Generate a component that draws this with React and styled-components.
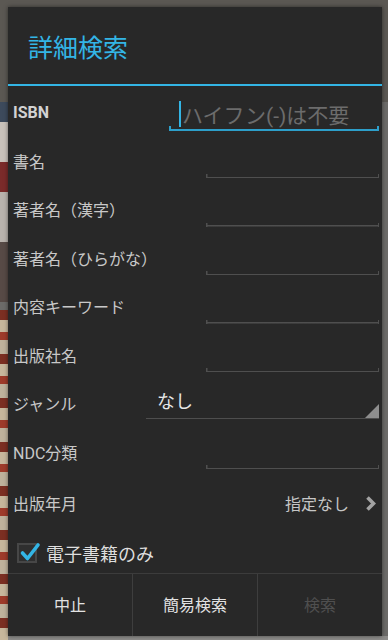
import React from 'react'
import styled, { createGlobalStyle } from 'styled-components'

const GlobalStyle = createGlobalStyle`
  html, body {
    margin: 0;
    padding: 0;
    width: 388px;
    height: 640px;
    overflow: hidden;
  }
  body {
    font-family: Roboto, "Noto Sans CJK JP", sans-serif;
    background: #6b6864;
    text-spacing-trim: space-all;
  }
`

const Screen = styled.div`
  width: 388px;
  height: 640px;
  box-sizing: border-box;
  padding: 7px 6px 4px 8px;
  display: flex;
  background:
    linear-gradient(#5b5853, #5b5853) left top / 100% 102px no-repeat,
    linear-gradient(180deg, #3d4a5c 0 20px, #c9c2bb 20px 60px, #7a2b2a 60px 90px, #b9b3ad 90px 140px, #574a46 140px 200px, transparent 200px) left 102px / 8px 100% no-repeat,
    repeating-linear-gradient(180deg, #7b2f22 0 10px, #c7b79c 10px 22px, #9e3b2a 22px 30px, #bfb29c 30px 44px) left 310px / 8px 330px no-repeat,
    linear-gradient(#8d8c8a, #8d8c8a) left 636px / 100% 4px no-repeat,
    #6c6b69;
`

const Dialog = styled.div`
  flex: 1;
  display: flex;
  flex-direction: column;
  background: #282828;
  box-shadow: 0 0 4px rgba(0, 0, 0, 0.5);
  overflow: hidden;
`

const TitleBar = styled.div`
  height: 77px;
  display: flex;
  align-items: center;
  padding-left: 20px;
  border-bottom: 2px solid #33b5e5;
  font-size: 25px;
  color: #33b5e5;
`

const Body = styled.div`
  padding-top: 2px;
  display: flex;
  flex-direction: column;
`

const Row = styled.div`
  height: ${({ $h }) => $h || 48.5}px;
  display: flex;
  align-items: center;
  padding: 0 3px 0 5px;
  box-sizing: border-box;
`

const Label = styled.div`
  flex: 1;
  font-size: 16px;
  font-weight: ${({ $bold }) => ($bold ? 700 : 400)};
  color: ${({ $bold }) => ($bold ? '#d2d2d2' : '#c8c8c8')};
  white-space: nowrap;
`

const Field = styled.div`
  align-self: flex-end;
  width: ${({ $w }) => $w}px;
  height: 34px;
  margin-bottom: ${({ $mb }) => ($mb != null ? $mb : 6)}px;
  display: flex;
  align-items: center;
  padding-left: 10px;
  box-sizing: border-box;
  background:
    linear-gradient(${({ $c }) => $c}, ${({ $c }) => $c}) left bottom / 100% ${({ $t }) => $t}px no-repeat,
    linear-gradient(${({ $c }) => $c}, ${({ $c }) => $c}) left bottom / ${({ $t }) => $t}px ${({ $tick }) => $tick}px no-repeat,
    linear-gradient(${({ $c }) => $c}, ${({ $c }) => $c}) right bottom / ${({ $t }) => $t}px ${({ $tick }) => $tick}px no-repeat;
`

const Cursor = styled.span`
  width: 2px;
  height: 26px;
  background: #33b5e5;
  margin-right: 1px;
`

const Placeholder = styled.span`
  font-size: 21px;
  color: #6c6c6c;
  white-space: nowrap;
`

const Spinner = styled.div`
  align-self: flex-end;
  width: 233px;
  height: 36px;
  margin-bottom: 9px;
  box-sizing: border-box;
  padding-left: 11px;
  display: flex;
  align-items: center;
  justify-content: space-between;
  border-bottom: 1.5px solid #4e4e4e;
  font-size: 18px;
  color: #e6e6e6;
`

const Corner = styled.svg`
  align-self: flex-end;
  display: block;
`

const Value = styled.div`
  display: flex;
  align-items: center;
  gap: 16px;
  font-size: 16px;
  color: #c6c6c6;
  padding-right: 3px;
`

const CheckRow = styled.label`
  height: 42.5px;
  display: flex;
  align-items: center;
  gap: 9px;
  padding: 3px 0 0 9px;
  box-sizing: border-box;
  font-size: 18px;
  color: #dedede;
`

const Box = styled.span`
  position: relative;
  width: 20px;
  height: 20px;
  box-sizing: border-box;
  border: 2px solid #474747;
  background: #2f2f2f;
  display: flex;
`

const Check = styled.svg`
  position: absolute;
  left: 1px;
  top: -2px;
  overflow: visible;
`

const ButtonBar = styled.div`
  display: flex;
  border-top: 1px solid #3c3c3c;
  flex: 1;
`

const Button = styled.button`
  flex: 1;
  border: none;
  background: transparent;
  font-family: inherit;
  font-size: 16px;
  color: ${({ disabled }) => (disabled ? '#4f4f4f' : '#e2e2e2')};
  padding: 0 0 2px;
  & + & {
    border-left: 1px solid #3e3e3e;
  }
`

const fields = [
  { label: '書名' },
  { label: '著者名（漢字）' },
  { label: '著者名（ひらがな）' },
  { label: '内容キーワード' },
  { label: '出版社名' },
]

const GrayField = () => <Field $w={173} $c="#4f4f4f" $t={1.5} $tick={4} $mb={7} />

const App = () => {
  return (
    <Screen>
      <GlobalStyle />
      <Dialog>
        <TitleBar>詳細検索</TitleBar>
        <Body>
          <Row>
            <Label $bold>ISBN</Label>
            <Field $w={210} $c="#2d9fca" $t={2} $tick={5} $mb={6}>
              <Cursor />
              <Placeholder>ハイフン(-)は不要</Placeholder>
            </Field>
          </Row>
          {fields.map((f) => (
            <Row key={f.label}>
              <Label>{f.label}</Label>
              <GrayField />
            </Row>
          ))}
          <Row>
            <Label>ジャンル</Label>
            <Spinner>
              なし
              <Corner width="14" height="14" viewBox="0 0 14 14">
                <polygon points="14,0 14,14 0,14" fill="#8e8e8e" />
              </Corner>
            </Spinner>
          </Row>
          <Row>
            <Label>NDC分類</Label>
            <GrayField />
          </Row>
          <Row $h={54.5}>
            <Label>出版年月</Label>
            <Value>
              指定なし
              <svg width="11" height="15" viewBox="0 0 11 15">
                <polyline points="2.5,1.5 8.5,7.5 2.5,13.5" fill="none" stroke="#a3a3a3" strokeWidth="3.6" />
              </svg>
            </Value>
          </Row>
          <CheckRow>
            <Box>
              <Check width="20" height="20" viewBox="0 0 20 20">
                <polyline points="2.5,10 7.5,15.5 18,2" fill="none" stroke="#33b5e5" strokeWidth="3.6" strokeLinecap="round" strokeLinejoin="round" />
              </Check>
            </Box>
            電子書籍のみ
          </CheckRow>
        </Body>
        <ButtonBar>
          <Button>中止</Button>
          <Button>簡易検索</Button>
          <Button disabled>検索</Button>
        </ButtonBar>
      </Dialog>
    </Screen>
  )
}

export default App
